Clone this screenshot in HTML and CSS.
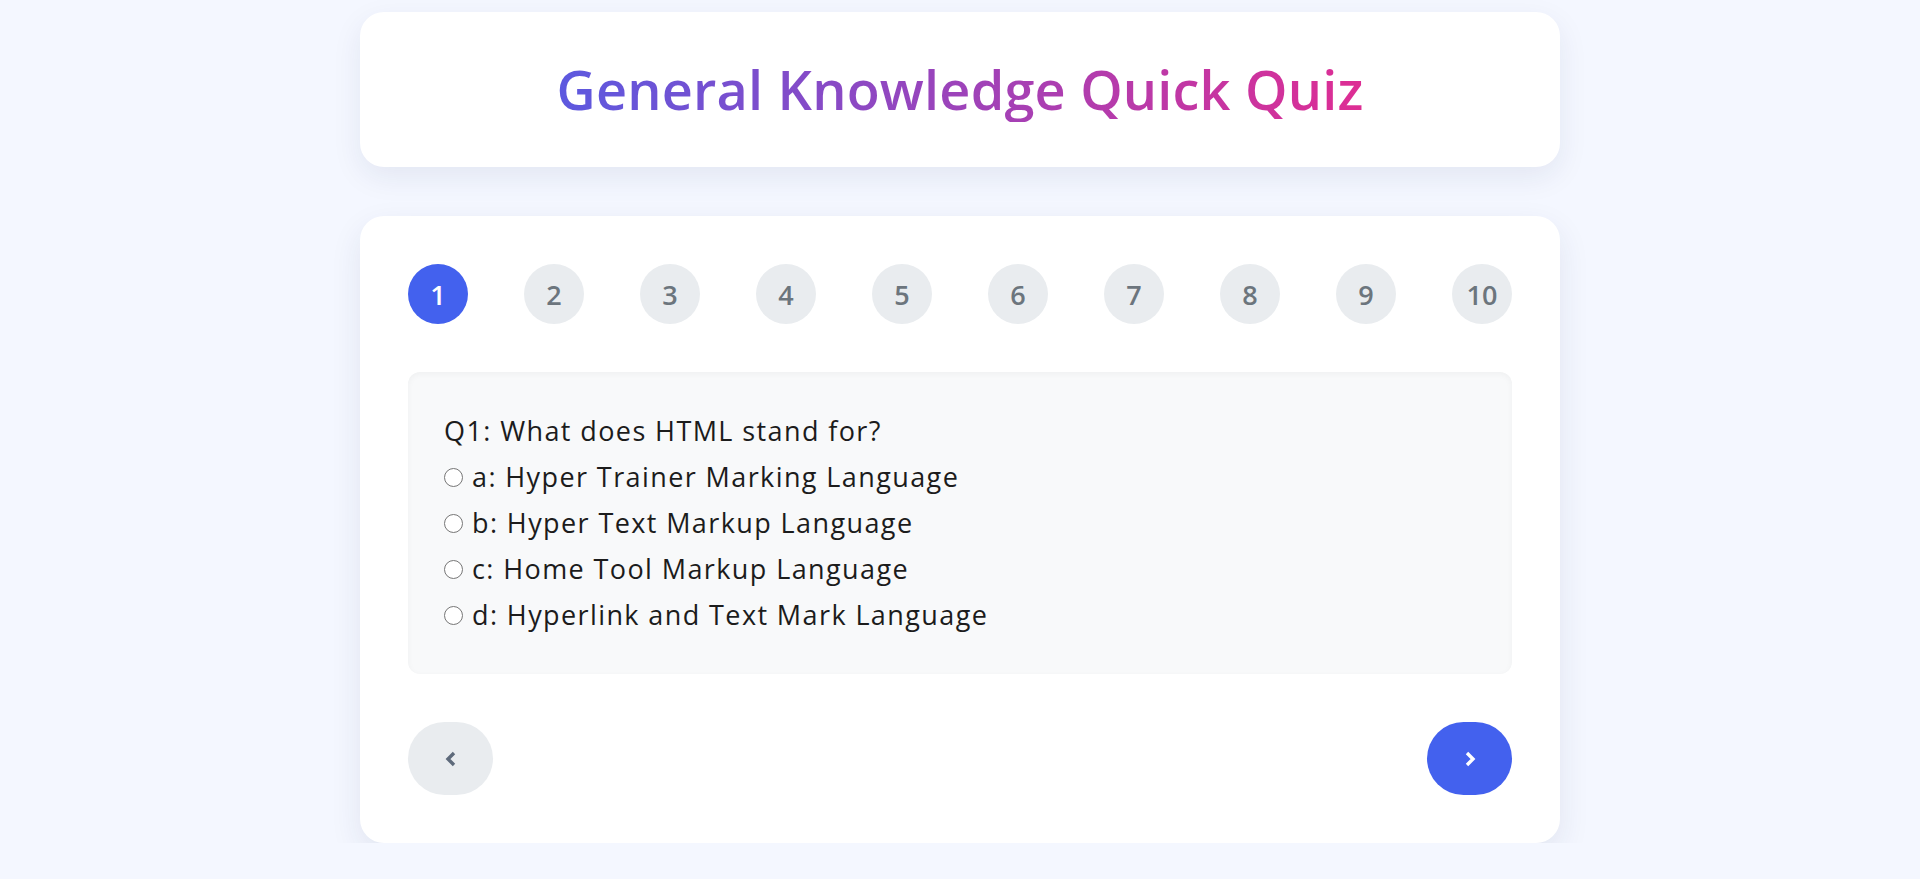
FILE: index.html
```html
<!DOCTYPE html>
<html lang="en">
<head>
<meta charset="utf-8">
<title>General Knowledge Quick Quiz</title>
<link rel="stylesheet" href="styles.css">
</head>
<body>
<div class="container">
  <header class="header">
    <h1 class="title">General Knowledge Quick Quiz</h1>
  </header>
  <main class="card">
    <div class="steps">
      <span class="step active">1</span>
      <span class="step">2</span>
      <span class="step">3</span>
      <span class="step">4</span>
      <span class="step">5</span>
      <span class="step">6</span>
      <span class="step">7</span>
      <span class="step">8</span>
      <span class="step">9</span>
      <span class="step">10</span>
    </div>
    <div class="question">
      <p class="q-text">Q1: What does HTML stand for?</p>
      <label class="option"><input type="radio" name="q1" class="radio"><span>a: Hyper Trainer Marking Language</span></label>
      <label class="option"><input type="radio" name="q1" class="radio"><span>b: Hyper Text Markup Language</span></label>
      <label class="option"><input type="radio" name="q1" class="radio"><span>c: Home Tool Markup Language</span></label>
      <label class="option"><input type="radio" name="q1" class="radio"><span>d: Hyperlink and Text Mark Language</span></label>
    </div>
    <div class="nav">
      <button class="btn btn-prev" type="button" aria-label="Previous">
        <svg width="14" height="16" viewBox="0 0 14 16"><polyline points="10,2 4,8 10,14" fill="none" stroke="currentColor" stroke-width="3.4" stroke-linecap="butt" stroke-linejoin="miter"/></svg>
      </button>
      <button class="btn btn-next" type="button" aria-label="Next">
        <svg width="14" height="16" viewBox="0 0 14 16"><polyline points="4,2 10,8 4,14" fill="none" stroke="currentColor" stroke-width="3.4" stroke-linecap="butt" stroke-linejoin="miter"/></svg>
      </button>
    </div>
  </main>
</div>
</body>
</html>
```

FILE: styles.css
```css
* {
  box-sizing: border-box;
}

body {
  margin: 0;
  background: #f4f7ff;
  font-family: "Open Sans", "Noto Sans", "Liberation Sans", sans-serif;
  color: #1d1d1f;
}

.container {
  width: 1200px;
  margin: 0 auto;
  padding-top: 12px;
}

.header {
  background: #ffffff;
  border-radius: 24px;
  height: 155px;
  padding: 0 40px;
  display: flex;
  align-items: center;
  justify-content: center;
  box-shadow: 0 10px 30px rgba(30, 40, 90, 0.08);
  margin-bottom: 49px;
}

.title {
  margin: 0;
  width: 100%;
  text-align: center;
  font-size: 54px;
  font-weight: 600;
  letter-spacing: 0.2px;
  line-height: 1.2;
  background: linear-gradient(90deg, #4361ee, #f72585);
  -webkit-background-clip: text;
  background-clip: text;
  color: transparent;
}

.card {
  background: #ffffff;
  border-radius: 24px;
  padding: 48px;
  box-shadow: 0 12px 32px rgba(30, 40, 90, 0.09);
}

.steps {
  display: flex;
  justify-content: space-between;
}

.step {
  width: 60px;
  height: 60px;
  border-radius: 50%;
  background: #e9ecef;
  color: #6c757d;
  display: flex;
  align-items: center;
  justify-content: center;
  font-size: 27px;
  font-weight: 600;
}

.step.active {
  background: #4361ee;
  color: #ffffff;
}

.question {
  margin-top: 48px;
  background: #f8f9fa;
  border-radius: 12px;
  padding: 36px;
  box-shadow: inset 0 2px 6px rgba(0, 0, 0, 0.04);
  font-size: 27px;
  letter-spacing: 1.4px;
  line-height: 46px;
  color: #1c1c1c;
}

.q-text {
  margin: 0;
}

.option {
  display: flex;
  align-items: center;
  gap: 9px;
  height: 46px;
}

.radio {
  appearance: none;
  -webkit-appearance: none;
  margin: 0;
  width: 19px;
  height: 19px;
  border-radius: 50%;
  border: 1.5px solid #767676;
  background: #ffffff;
  flex-shrink: 0;
}

.nav {
  margin-top: 48px;
  display: flex;
  justify-content: space-between;
}

.btn {
  width: 85px;
  height: 73px;
  border: none;
  border-radius: 37px;
  display: flex;
  align-items: center;
  justify-content: center;
  padding: 0;
}

.btn-prev {
  background: #e9ecef;
  color: #5e6a7b;
}

.btn-next {
  background: #4361ee;
  color: #ffffff;
}
```
